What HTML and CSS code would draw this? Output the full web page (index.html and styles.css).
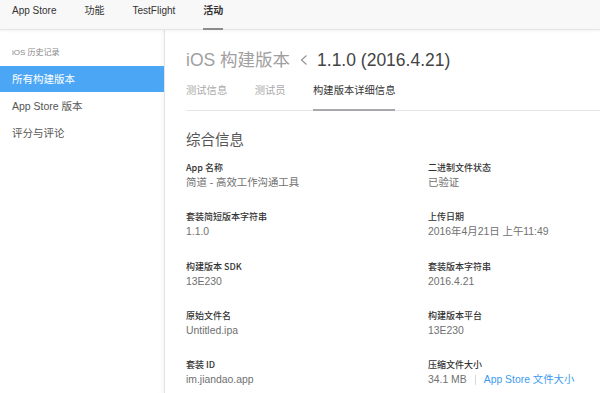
FILE: index.html
```html
<!DOCTYPE html>
<html lang="zh">
<head>
  <meta charset="UTF-8">
  <title>iOS 构建版本</title>
  <link rel="stylesheet" href="styles.css">
</head>
<body>

<!-- 顶部导航 -->
<div class="topbar">
  <a class="nav">App Store</a>
  <a class="nav">功能</a>
  <a class="nav">TestFlight</a>
  <a class="nav active">活动</a>
</div>

<div class="layout">

  <!-- 侧栏 -->
  <div class="sidebar">
    <div class="side-title">iOS 历史记录</div>
    <a class="side-item selected">所有构建版本</a>
    <a class="side-item">App Store 版本</a>
    <a class="side-item">评分与评论</a>
  </div>

  <!-- 主区域 -->
  <div class="main">
    <h1 class="title">
      <span class="crumb">iOS 构建版本</span>
      <svg class="chev" width="8" height="12" viewBox="0 0 8 12"><polyline points="6.5,1.5 1.5,6 6.5,10.5" fill="none" stroke="#9a9a9a" stroke-width="1.3"/></svg>
      <span class="ver">1.1.0 (2016.4.21)</span>
    </h1>

    <div class="tabs">
      <a class="tab">测试信息</a>
      <a class="tab">测试员</a>
      <a class="tab active">构建版本详细信息</a>
    </div>

    <h2 class="section">综合信息</h2>

    <div class="grid">
      <div class="field"><div class="label">App 名称</div><div class="value">简道 - 高效工作沟通工具</div></div>
      <div class="field"><div class="label">二进制文件状态</div><div class="value">已验证</div></div>

      <div class="field"><div class="label">套装简短版本字符串</div><div class="value">1.1.0</div></div>
      <div class="field"><div class="label">上传日期</div><div class="value">2016年4月21日 上午11:49</div></div>

      <div class="field"><div class="label">构建版本 SDK</div><div class="value">13E230</div></div>
      <div class="field"><div class="label">套装版本字符串</div><div class="value">2016.4.21</div></div>

      <div class="field"><div class="label">原始文件名</div><div class="value">Untitled.ipa</div></div>
      <div class="field"><div class="label">构建版本平台</div><div class="value">13E230</div></div>

      <div class="field"><div class="label">套装 ID</div><div class="value">im.jiandao.app</div></div>
      <div class="field"><div class="label">压缩文件大小</div><div class="value">34.1 MB<span class="sep"></span><a class="link">App Store 文件大小</a></div></div>
    </div>
  </div>

</div>
</body>
</html>
```

FILE: styles.css
```css
:root{
  --c-text:#333; --c-sub:#707070; --c-muted:#a0a0a0;
  --c-line:#e6e6e6; --c-blue:#4ba7f6; --c-link:#3d9bef;
}
body{
  margin:0;background:#fff;color:var(--c-text);
  font-family:"Liberation Sans","Noto Sans CJK SC",Arial,sans-serif;
  overflow:hidden
}
a{text-decoration:none;color:inherit}

/* 顶部导航 */
.topbar{
  height:29px;display:flex;align-items:stretch;gap:28px;padding-left:12px;
  background:#f8f8f8;border-bottom:1px solid #e4e4e4;
  box-shadow:0 1px 3px rgba(0,0,0,.05);position:relative;z-index:2
}
.nav{font-size:10px;line-height:22px;color:#333;border-bottom:2px solid transparent;margin-bottom:-1px}
.nav.active{font-weight:700;border-bottom-color:#8c8c8c}

.layout{display:flex;height:363px}

/* 侧栏 */
.sidebar{
  width:164px;flex:none;border-right:1px solid #e3e3e3;padding-top:16px;
  box-shadow:inset -5px 0 6px -5px rgba(0,0,0,.06)
}
.side-title{font-size:8px;line-height:14px;color:#888;padding-left:12px;margin-bottom:6px}
.side-item{display:block;height:27px;line-height:27px;padding-left:12px;font-size:10.5px;color:#555}
.side-item.selected{height:26px;line-height:26px;margin-bottom:1px;background:var(--c-blue);color:#fff}

/* 主区域 */
.main{flex:1;padding:18px 0 0 21px}
.title{margin:0;font-weight:400;font-size:17.5px;line-height:24px;display:flex;align-items:center}
.crumb{color:var(--c-muted)}
.chev{margin:0 9px 0 10px}
.ver{color:#444}

.tabs{display:flex;gap:27.5px;margin-top:12px;border-bottom:1px solid var(--c-line)}
.tab{font-size:10.3px;line-height:14px;padding-bottom:11px;color:#aaa;border-bottom:2px solid transparent;margin-bottom:-1px}
.tab.active{color:#333;border-bottom-color:#a8a8ae}

.section{margin:19px 0 11px;font-weight:400;font-size:14.5px;line-height:20px;color:#555}

.grid{display:grid;grid-template-columns:242px 1fr;row-gap:20.3px}
.label{font-family:"Noto Sans CJK SC",sans-serif;font-size:9px;line-height:14px;color:#333;font-weight:500}
.value{font-size:10.4px;line-height:15px;color:var(--c-sub);display:flex;align-items:center}
.sep{display:inline-block;width:1px;height:10px;background:#d8d8d8;margin:0 8px}
.link{color:var(--c-link)}
```
